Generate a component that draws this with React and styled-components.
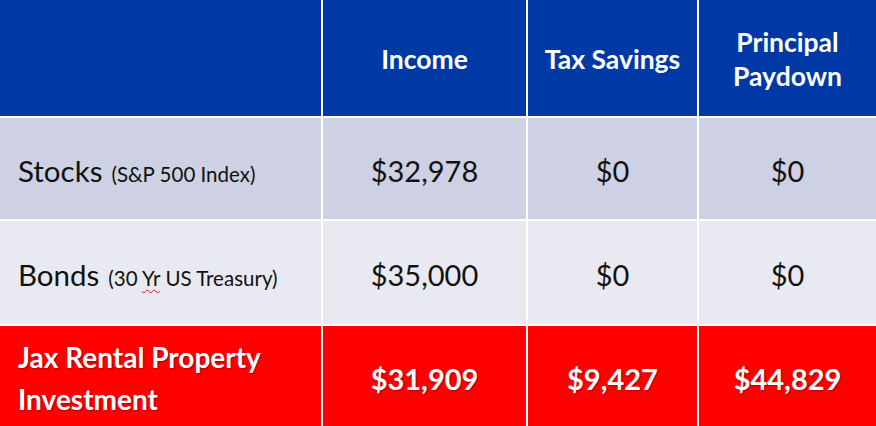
import React from "react";
import styled, { createGlobalStyle } from "styled-components";

function App() {
  const rows = [
    {
      tone: "dark",
      label: "Stocks",
      note: "(S&P 500 Index)",
      values: ["$32,978", "$0", "$0"],
    },
    {
      tone: "light",
      label: "Bonds",
      note: (
        <>
          (30 <Squiggle>Yr</Squiggle> US Treasury)
        </>
      ),
      values: ["$35,000", "$0", "$0"],
    },
  ];

  return (
    <>
      <GlobalStyle />
      <Table>
        <HeaderCell />
        <HeaderCell>Income</HeaderCell>
        <HeaderCell>Tax Savings</HeaderCell>
        <HeaderCell>
          Principal
          <br />
          Paydown
        </HeaderCell>

        {rows.map((row) => (
          <React.Fragment key={row.label}>
            <LabelCell $tone={row.tone}>
              {row.label}
              <Note>{row.note}</Note>
            </LabelCell>
            {row.values.map((v, i) => (
              <ValueCell key={i} $tone={row.tone}>
                {v}
              </ValueCell>
            ))}
          </React.Fragment>
        ))}

        <LabelCell $tone="red">
          Jax Rental Property
          <br />
          Investment
        </LabelCell>
        <ValueCell $tone="red">$31,909</ValueCell>
        <ValueCell $tone="red">$9,427</ValueCell>
        <ValueCell $tone="red">$44,829</ValueCell>
      </Table>
    </>
  );
}

const tones = {
  dark: "#cdd1e3",
  light: "#e8e9f1",
  red: "#ff0000",
};

const GlobalStyle = createGlobalStyle`
  html, body {
    margin: 0;
    padding: 0;
    background: #ffffff;
  }
  body {
    font-family: Lato, "Open Sans", sans-serif;
  }
`;

const Table = styled.div`
  display: grid;
  grid-template-columns: 321px 203px 169px 177px;
  grid-template-rows: 116px 101px 103px 100px;
  gap: 2px;
  width: 876px;
  height: 426px;
  background-color: #ffffff;
`;

const HeaderCell = styled.div`
  display: flex;
  align-items: center;
  justify-content: center;
  text-align: center;
  background-color: #0039a6;
  color: #ffffff;
  font-size: 26.5px;
  font-weight: 700;
  line-height: 34px;
  padding-top: 2px;
`;

const LabelCell = styled.div`
  display: block;
  align-content: center;
  padding-left: 18px;
  background-color: ${(p) => tones[p.$tone]};
  color: ${(p) => (p.$tone === "red" ? "#ffffff" : "#111111")};
  font-size: ${(p) => (p.$tone === "red" ? "28px" : "29.5px")};
  font-weight: ${(p) => (p.$tone === "red" ? 700 : 400)};
  line-height: ${(p) => (p.$tone === "red" ? "42px" : "1.2")};
  text-shadow: ${(p) =>
    p.$tone === "red" ? "1px 1px 2px rgba(0, 0, 0, 0.35)" : "none"};
  padding-top: 4px;
`;

const Note = styled.span`
  font-size: 20.5px;
  margin-left: 9px;
`;

const Squiggle = styled.span`
  text-decoration: underline wavy #d42020;
  text-decoration-thickness: 1px;
  text-underline-offset: 3px;
`;

const ValueCell = styled.div`
  display: flex;
  align-items: center;
  justify-content: center;
  background-color: ${(p) => tones[p.$tone]};
  color: ${(p) => (p.$tone === "red" ? "#ffffff" : "#111111")};
  font-size: 29px;
  font-weight: ${(p) => (p.$tone === "red" ? 700 : 400)};
  text-shadow: ${(p) =>
    p.$tone === "red" ? "1px 1px 2px rgba(0, 0, 0, 0.35)" : "none"};
  padding-top: 4px;
`;

export default App;
